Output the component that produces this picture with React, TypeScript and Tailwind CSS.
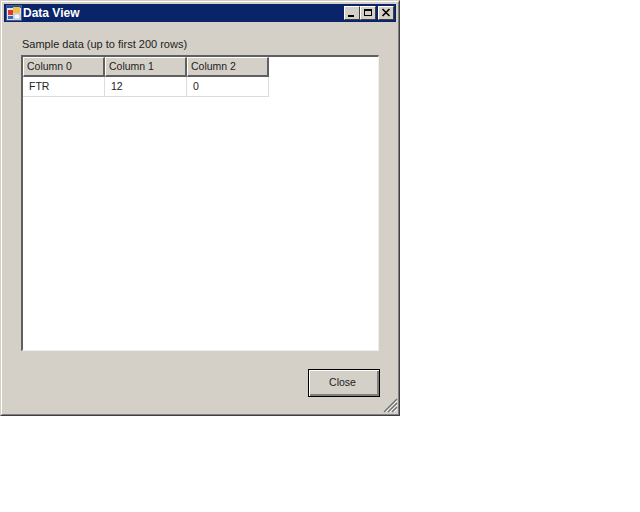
const font = { fontFamily: '"Liberation Sans", Arial, sans-serif' };

const columns = ["Column 0", "Column 1", "Column 2"];
const row = ["FTR", "12", "0"];

function AppIcon() {
  return (
    <svg width="16" height="16" viewBox="0 0 16 16" className="shrink-0">
      <rect x="0.5" y="0.5" width="15" height="15" fill="#dfe3ee" stroke="#4a5a8a" />
      <rect x="1" y="1" width="14" height="2" fill="#2a4a9a" />
      <rect x="2" y="5" width="5" height="5" fill="#d83a2a" />
      <rect x="7" y="2" width="7" height="6" fill="#f0c040" />
      <rect x="2" y="11" width="5" height="3" fill="#3a6ac0" />
      <rect x="8" y="9" width="6" height="5" fill="#f4f4f4" stroke="#8090b0" strokeWidth="0.5" />
    </svg>
  );
}

function CaptionButton({ children }: { children: React.ReactNode }) {
  return (
    <div className="flex h-[14px] w-[16px] items-center justify-center border border-t-white border-l-white border-r-[#404040] border-b-[#404040] bg-[#d4d0c8]">
      <svg width="12" height="10" viewBox="0 0 12 10">
        {children}
      </svg>
    </div>
  );
}

export default function App() {
  return (
    <div className="h-[512px] w-[640px] bg-white" style={font}>
      <div className="relative h-[416px] w-[400px] border border-t-[#d4d0c8] border-l-[#d4d0c8] border-r-[#404040] border-b-[#404040] bg-[#d4d0c8]">
        <div className="flex h-full flex-col border border-t-white border-l-white border-r-[#808080] border-b-[#808080] px-[2px] pt-[2px]">
          <div className="flex h-[18px] items-center bg-[#0a246a] pl-[2px] pr-[2px]">
            <AppIcon />
            <span className="ml-[1px] text-[12px] font-bold text-white">Data View</span>
            <div className="ml-auto flex items-center">
              <CaptionButton>
                <rect x="2" y="7" width="6" height="2" fill="#000" />
              </CaptionButton>
              <CaptionButton>
                <path d="M2 1h8v7H2z M3 3v4h6V3z" fill="#000" fillRule="evenodd" />
              </CaptionButton>
              <div className="ml-[2px]">
                <CaptionButton>
                  <path d="M2.5 1 L9.5 8 M9.5 1 L2.5 8" stroke="#000" strokeWidth="1.6" />
                </CaptionButton>
              </div>
            </div>
          </div>

          <div className="flex flex-1 flex-col pl-[17px] pr-[16px]">
            <div className="mt-[16px] pl-[1px] text-[11px] leading-[13px] text-[#222]">
              Sample data (up to first 200 rows)
            </div>
            <div className="mr-[1px] mt-[4px] h-[296px] border-t-2 border-l-2 border-r border-b border-t-[#606060] border-l-[#606060] border-r-[#f0eeea] border-b-[#f0eeea] bg-white">
              <div className="flex">
                {columns.map((c) => (
                  <div
                    key={c}
                    className="flex h-[20px] w-[82px] items-center border-t border-l border-r-2 border-b-2 border-t-white border-l-white border-r-[#606060] border-b-[#606060] bg-[#d4d0c8] pl-[3px] text-[10.5px] text-[#222]"
                  >
                    {c}
                  </div>
                ))}
              </div>
              <div className="flex">
                {row.map((v) => (
                  <div
                    key={v}
                    className="flex h-[20px] w-[82px] items-center border-r border-b border-[#dedcd6] pl-[6px] text-[10.5px] text-[#222]"
                  >
                    {v}
                  </div>
                ))}
              </div>
            </div>
            <div className="mt-[18px] flex justify-end">
              <button className="h-[28px] w-[72px] border border-black bg-[#d4d0c8] pr-[3px] text-[10.5px] text-[#222] shadow-[inset_1px_1px_0_#fff,inset_-2px_-2px_0_#808080]">
                Close
              </button>
            </div>
          </div>
        </div>
        <svg
          width="15"
          height="15"
          viewBox="0 0 15 15"
          className="absolute bottom-[2px] right-[1px]"
        >
          <path d="M14 1 L1 14 M14 5 L5 14 M14 9 L9 14" stroke="#707070" strokeWidth="1.4" />
          <path d="M14 3 L3 14 M14 7 L7 14 M14 11 L11 14" stroke="#fff" strokeWidth="0.8" />
        </svg>
      </div>
    </div>
  );
}
